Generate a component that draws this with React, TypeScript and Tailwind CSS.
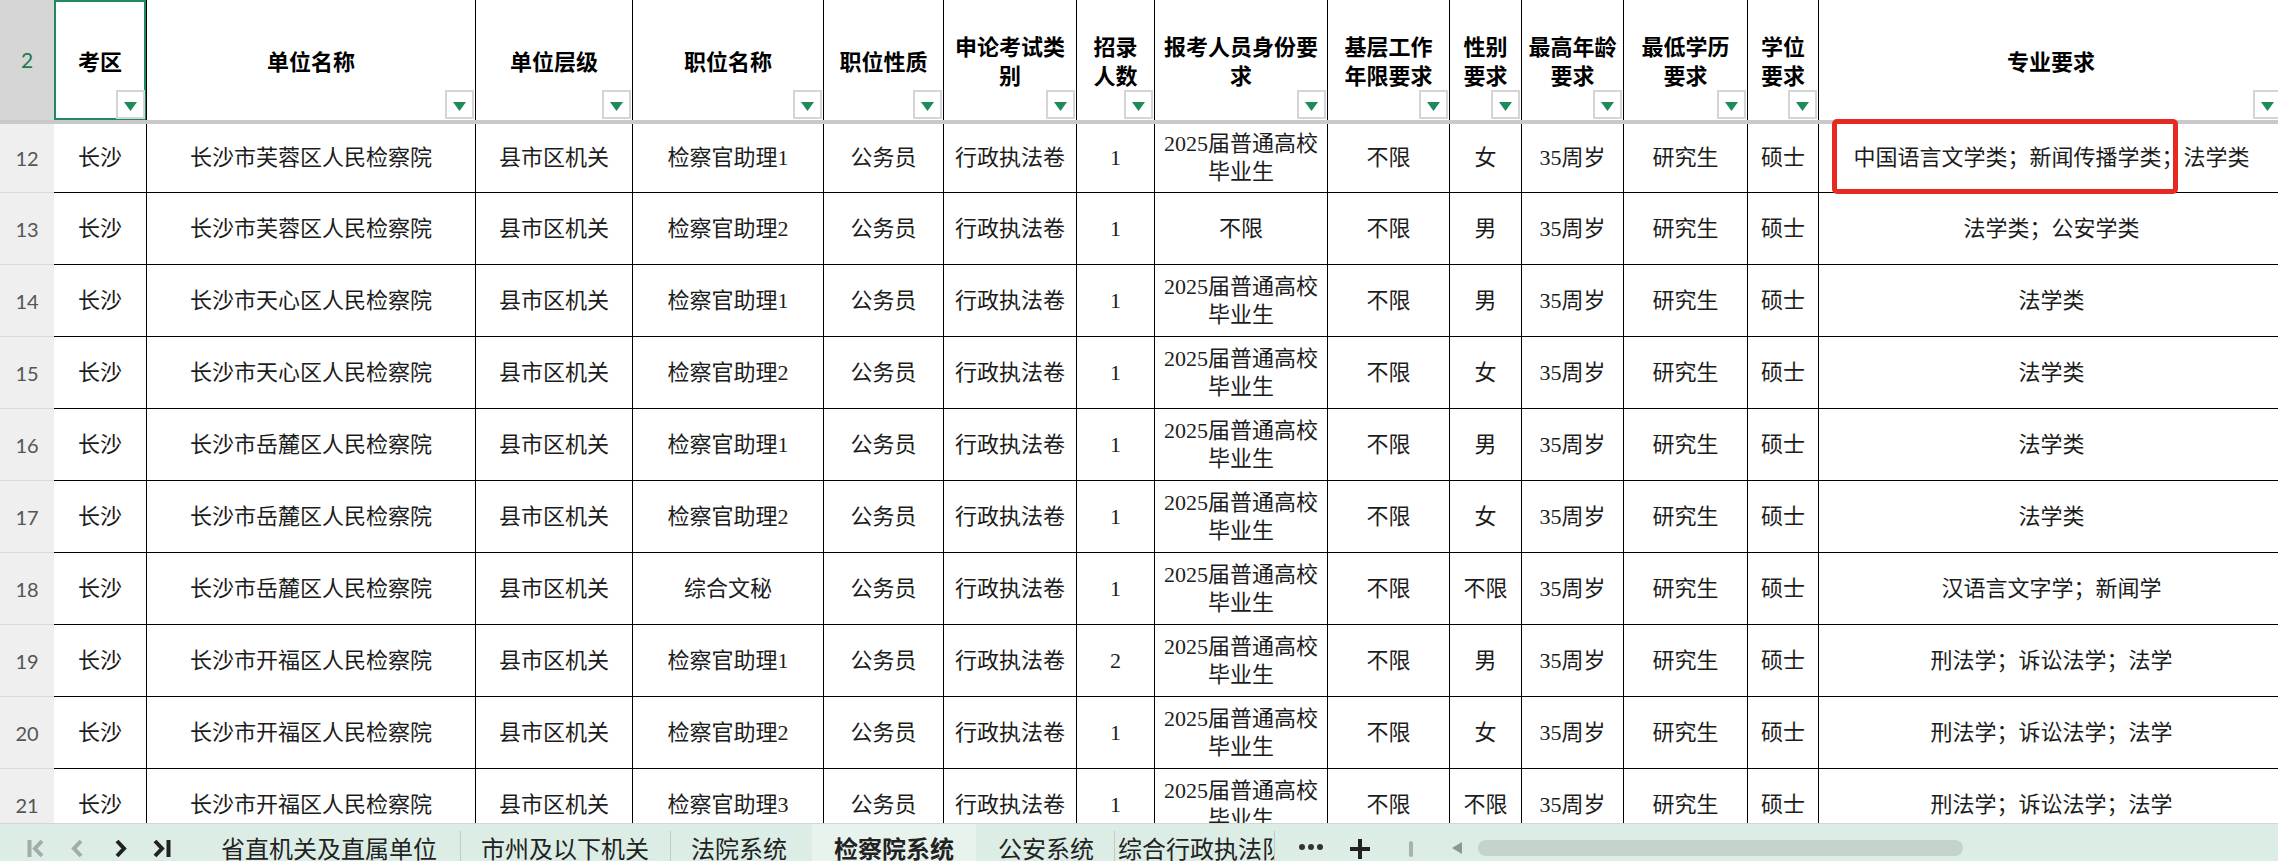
import React from "react"

const COLS =
  "grid grid-cols-[54px_93px_329px_157px_191px_120px_133px_78px_173px_122px_72px_102px_124px_71px_465px]"

const BODY_FONT = { fontFamily: '"Liberation Serif", "Noto Sans CJK SC", serif' }
const HEAD_FONT = { fontFamily: '"Noto Sans CJK SC", sans-serif' }
const NUM_FONT = { fontFamily: 'Lato, "Open Sans", sans-serif' }

const headers: string[][] = [
  ["考区"],
  ["单位名称"],
  ["单位层级"],
  ["职位名称"],
  ["职位性质"],
  ["申论考试类", "别"],
  ["招录", "人数"],
  ["报考人员身份要", "求"],
  ["基层工作", "年限要求"],
  ["性别", "要求"],
  ["最高年龄", "要求"],
  ["最低学历", "要求"],
  ["学位", "要求"],
  ["专业要求"],
]

type Row = {
  n: number
  district: string
  post: string
  count: string
  grad: boolean
  sex: string
  major: string
}

const rows: Row[] = [
  { n: 12, district: "芙蓉区", post: "检察官助理1", count: "1", grad: true, sex: "女", major: "中国语言文学类；新闻传播学类；法学类" },
  { n: 13, district: "芙蓉区", post: "检察官助理2", count: "1", grad: false, sex: "男", major: "法学类；公安学类" },
  { n: 14, district: "天心区", post: "检察官助理1", count: "1", grad: true, sex: "男", major: "法学类" },
  { n: 15, district: "天心区", post: "检察官助理2", count: "1", grad: true, sex: "女", major: "法学类" },
  { n: 16, district: "岳麓区", post: "检察官助理1", count: "1", grad: true, sex: "男", major: "法学类" },
  { n: 17, district: "岳麓区", post: "检察官助理2", count: "1", grad: true, sex: "女", major: "法学类" },
  { n: 18, district: "岳麓区", post: "综合文秘", count: "1", grad: true, sex: "不限", major: "汉语言文字学；新闻学" },
  { n: 19, district: "开福区", post: "检察官助理1", count: "2", grad: true, sex: "男", major: "刑法学；诉讼法学；法学" },
  { n: 20, district: "开福区", post: "检察官助理2", count: "1", grad: true, sex: "女", major: "刑法学；诉讼法学；法学" },
  { n: 21, district: "开福区", post: "检察官助理3", count: "1", grad: true, sex: "不限", major: "刑法学；诉讼法学；法学" },
]

function FilterButton() {
  return (
    <div className="absolute right-px bottom-px z-10 flex h-[29px] w-[29px] items-center justify-center border-2 border-[#d5d5d5] bg-white">
      <svg width="13" height="9" viewBox="0 0 13 9" className="mt-[3px]">
        <path d="M0 0 H13 L6.5 9 Z" fill="#1d8a5a" />
      </svg>
    </div>
  )
}

function HeaderRow() {
  return (
    <div className={`${COLS} h-[120px]`}>
      <div
        className="flex items-center justify-center bg-[#d6d6d6] text-[21px] text-[#1f7a50]"
        style={NUM_FONT}
      >
        2
      </div>
      {headers.map((lines, i) => (
        <div
          key={i}
          className="relative flex flex-col items-center justify-center border-r border-black bg-white text-[22px] leading-[29px] font-bold text-black"
          style={HEAD_FONT}
        >
          {lines.map((l) => (
            <span key={l} className="whitespace-nowrap">
              {l}
            </span>
          ))}
          {i === 0 && (
            <div className="pointer-events-none absolute inset-0 border-2 border-[#1f8a5c]" />
          )}
          <FilterButton />
        </div>
      ))}
    </div>
  )
}

function Cell({ children }: { children: React.ReactNode }) {
  return (
    <div className="flex flex-col items-center justify-center border-r border-b border-black text-center whitespace-nowrap">
      {children}
    </div>
  )
}

function DataRow({ row, first }: { row: Row; first: boolean }) {
  return (
    <div
      className={`${COLS} ${first ? "h-[69px]" : "h-[72px]"} text-[22px] leading-[28px] text-[#1c1c1c]`}
      style={BODY_FONT}
    >
      <div
        className="flex items-center justify-center border-b border-[#d9d9d9] bg-[#efefef] text-[20px] text-[#555]"
        style={NUM_FONT}
      >
        {row.n}
      </div>
      <Cell>长沙</Cell>
      <Cell>长沙市{row.district}人民检察院</Cell>
      <Cell>县市区机关</Cell>
      <Cell>{row.post}</Cell>
      <Cell>公务员</Cell>
      <Cell>行政执法卷</Cell>
      <Cell>{row.count}</Cell>
      <Cell>
        {row.grad ? (
          <>
            <span>2025届普通高校</span>
            <span>毕业生</span>
          </>
        ) : (
          "不限"
        )}
      </Cell>
      <Cell>不限</Cell>
      <Cell>{row.sex}</Cell>
      <Cell>35周岁</Cell>
      <Cell>研究生</Cell>
      <Cell>硕士</Cell>
      <div className="flex items-center justify-center border-b border-black whitespace-nowrap">
        {row.major}
      </div>
    </div>
  )
}

function NavIcon({ kind, dark }: { kind: "first" | "prev" | "next" | "last"; dark: boolean }) {
  const c = dark ? "#222" : "#a3aca8"
  return (
    <div className="flex w-[42px] justify-center pt-[15px]">
      <svg width="20" height="19" viewBox="0 0 20 19" fill="none">
        {kind === "first" && (
          <>
            <path d="M3.5 1 V18" stroke={c} strokeWidth="4" />
            <path d="M16 2 L9 9.5 L16 17" stroke={c} strokeWidth="4" />
          </>
        )}
        {kind === "prev" && <path d="M13 2 L6 9.5 L13 17" stroke={c} strokeWidth="4" />}
        {kind === "next" && <path d="M7 2 L14 9.5 L7 17" stroke={c} strokeWidth="4" />}
        {kind === "last" && (
          <>
            <path d="M3 2 L10 9.5 L3 17" stroke={c} strokeWidth="4" />
            <path d="M16.5 1 V18" stroke={c} strokeWidth="4" />
          </>
        )}
      </svg>
    </div>
  )
}

function Sep() {
  return <div className="mt-[7px] w-px bg-[#c2ccc7]" />
}

function TabBar() {
  const tab = "pt-[12px] text-[24px] leading-[24px] whitespace-nowrap text-[#222]"
  return (
    <div
      className="flex h-[38px] items-stretch overflow-hidden border-t border-[#cfd8d3] bg-[#dbede5]"
      style={HEAD_FONT}
    >
      <div className="flex w-[200px] pl-[15px]">
        <NavIcon kind="first" dark={false} />
        <NavIcon kind="prev" dark={false} />
        <NavIcon kind="next" dark />
        <NavIcon kind="last" dark />
      </div>
      <div className={`${tab} pr-[23px] pl-[21px]`}>省直机关及直属单位</div>
      <Sep />
      <div className={`${tab} pr-[21px] pl-[20px]`}>市州及以下机关</div>
      <Sep />
      <div className={`${tab} w-[141px] pl-[20px]`}>法院系统</div>
      <div className={`${tab} bg-[#e8f3ee] px-[22px] font-bold text-[#1b7a4c]`}>检察院系统</div>
      <div className={`${tab} pr-[20px] pl-[22px]`}>公安系统</div>
      <Sep />
      <div className={`${tab} w-[159px] overflow-hidden pl-[3px]`}>综合行政执法队</div>
      <Sep />
      <div className="flex w-[72px] justify-center pt-[19px]">
        <svg width="26" height="8" viewBox="0 0 26 8">
          <circle cx="4" cy="4" r="3" fill="#333" />
          <circle cx="13" cy="4" r="3" fill="#333" />
          <circle cx="22" cy="4" r="3" fill="#333" />
        </svg>
      </div>
      <div className="flex w-[26px] justify-center pt-[14px]">
        <svg width="22" height="22" viewBox="0 0 22 22">
          <path d="M11 1 V21 M1 11 H21" stroke="#222" strokeWidth="4" />
        </svg>
      </div>
      <div className="flex w-[76px] justify-center pt-[17px]">
        <div className="h-[16px] w-[4px] rounded-full bg-[#a9b3ae]" />
      </div>
      <div className="flex w-[16px] justify-center pt-[18px]">
        <svg width="10" height="12" viewBox="0 0 10 12">
          <path d="M10 0 V12 L0 6 Z" fill="#8e9893" />
        </svg>
      </div>
      <div className="pt-[16px] pl-[13px]">
        <div className="h-[16px] w-[485px] rounded-full bg-[#c4d4cd]" />
      </div>
    </div>
  )
}

export default function App() {
  return (
    <div className="relative h-[861px] w-[2278px] overflow-hidden bg-white">
      <div className="h-[823px] overflow-hidden">
        <HeaderRow />
        <div className="h-[4px] bg-[#c9c9c9]" />
        {rows.map((r, i) => (
          <DataRow key={r.n} row={r} first={i === 0} />
        ))}
      </div>
      <TabBar />
      <div className="pointer-events-none absolute top-[119px] left-[1832px] h-[75px] w-[346px] rounded-[5px] border-[5px] border-[#e62a22]" />
    </div>
  )
}
